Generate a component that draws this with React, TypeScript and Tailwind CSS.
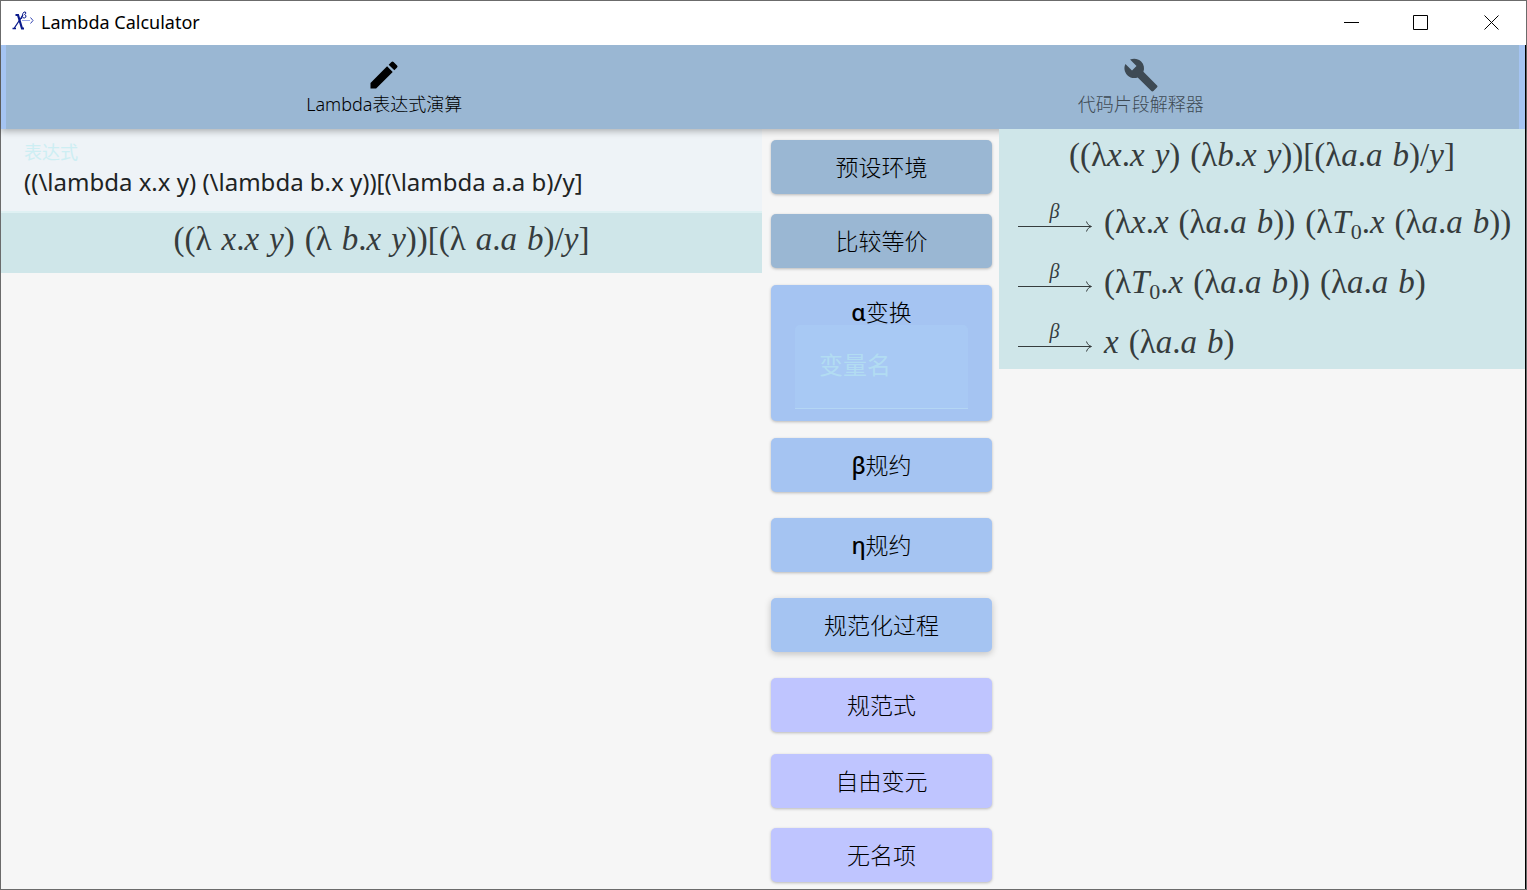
import React from "react";
import { MdBuild, MdEdit } from "react-icons/md";

const uiFont = "font-['Noto_Sans','Noto_Sans_CJK_SC',sans-serif]";

/* Latin letters are set in italics; λ, brackets, dots and digits upright. */
function Word({ text }: { text: string }) {
  const parts = text.match(/[a-zA-Z]+|_\d|[^a-zA-Z_]+/g) ?? [];
  return (
    <span>
      {parts.map((part, i) =>
        part.startsWith("_") ? (
          <sub key={i} className="text-[22px] leading-none">
            {part.slice(1)}
          </sub>
        ) : /[a-zA-Z]/.test(part) ? (
          <i key={i}>{part}</i>
        ) : (
          <span key={i}>{part}</span>
        ),
      )}
    </span>
  );
}

function Formula({ source }: { source: string }) {
  return (
    <span className="flex items-baseline gap-[10px] whitespace-nowrap font-['Liberation_Serif',serif] text-[33px] leading-[40px] text-[#363c3d]">
      {source.split(" ").map((word, i) => (
        <Word key={i} text={word} />
      ))}
    </span>
  );
}

function BetaArrow() {
  return (
    <span className="flex w-[75px] shrink-0 flex-col items-center text-[#363c3d]">
      <i className="font-['Liberation_Serif',serif] text-[20px] leading-[18px]">β</i>
      <svg className="h-[12px] w-full" viewBox="0 0 75 12" fill="none" stroke="currentColor" aria-hidden="true">
        <path d="M1 6.5H74M69.5 1.5C70.2 4 72 5.7 74.5 6.5C72 7.3 70.2 9 69.5 11.5" />
      </svg>
    </span>
  );
}

function Logo() {
  return (
    <svg className="h-[22px] w-[22px]" viewBox="0 0 22 22" fill="none" stroke="#0a1a8c" aria-hidden="true">
      <path d="M3.5 4H6L10 17.5H12" strokeWidth="2.2" />
      <path d="M11 4L2 17.5M0.5 17.5H4" strokeWidth="1.3" />
      <path d="M9.5 8L11 2.2Q11.8 0.5 13.4 1Q14.8 2 12.6 3.6Q14.8 4.4 13.8 6.2Q12.4 7.6 10.8 6.6" strokeWidth="1" />
      <path d="M10 9.5H18" stroke="#9aa6e6" strokeWidth="1" />
      <path d="M18.5 6.5L21 9.5L18.5 12.5" stroke="#3344b0" strokeWidth="1" />
    </svg>
  );
}

type ToolButtonProps = { greek?: string; label: string; tone: "steel" | "sky" | "lilac"; raised?: boolean };

function ToolButton({ greek, label, tone, raised }: ToolButtonProps) {
  const tones = { steel: "bg-[#9ab7d3]", sky: "bg-[#a5c4f2]", lilac: "bg-[#bfc5ff]" };
  const shadow = raised ? "shadow-[0_2px_7px_rgba(0,0,0,0.22)]" : "shadow-[0_1px_3px_rgba(0,0,0,0.25)]";
  return (
    <button type="button" className={`h-[54px] w-full shrink-0 rounded-[5px] pt-px text-[23px] font-light text-black ${tones[tone]} ${shadow}`}>
      {greek && <span className="font-medium">{greek}</span>}
      {label}
    </button>
  );
}

const steps = ["(λx.x (λa.a b)) (λT_0.x (λa.a b))", "(λT_0.x (λa.a b)) (λa.a b)", "x (λa.a b)"];

export default function App() {
  return (
    <div className={`flex min-h-screen flex-col border border-[#6b6b6b] bg-[#f6f6f6] ${uiFont}`}>
      <header className="relative z-20 flex h-11 items-center bg-white pb-[2px] pl-[11px]">
        <Logo />
        <h1 className="flex-1 pl-[7px] text-[18px] leading-6 text-black">Lambda Calculator</h1>
        <div className="flex h-full text-black">
          <button type="button" aria-label="Minimize" className="flex w-[70px] items-center justify-center">
            <svg className="size-4" viewBox="0 0 16 16" fill="none" stroke="currentColor">
              <path d="M1 8.5H16" />
            </svg>
          </button>
          <button type="button" aria-label="Maximize" className="flex w-[70px] items-center justify-center">
            <svg className="size-4" viewBox="0 0 16 16" fill="none" stroke="currentColor">
              <path d="M0.5 1.5H14.5V15.5H0.5Z" />
            </svg>
          </button>
          <button type="button" aria-label="Close" className="flex w-[70px] items-center justify-center">
            <svg className="size-4" viewBox="0 0 16 16" fill="none" stroke="currentColor">
              <path d="M1.5 1.5L15.5 15.5M15.5 1.5L1.5 15.5" />
            </svg>
          </button>
        </div>
      </header>

      <div className="flex flex-1 flex-col border-r border-black">
        <nav className="relative z-10 flex h-[84px] bg-[#a5c4f2] pl-[5px] pr-[6px] shadow-[0_2px_7px_rgba(0,0,0,0.3)]">
          <button type="button" className="flex flex-1 flex-col items-center bg-[#9ab7d3] pt-3 text-[18px] font-light leading-[22px] text-black">
            <MdEdit className="size-9" />
            Lambda表达式演算
          </button>
          <button type="button" className="flex flex-1 flex-col items-center bg-[#9ab7d3] pt-3 text-[18px] font-light leading-[22px] text-[#3e4a54]">
            <MdBuild className="size-9" />
            代码片段解释器
          </button>
        </nav>

        <main className="grid flex-1 grid-cols-[761fr_237fr_526fr] items-start">
          <section>
            <div className="flex h-[84px] flex-col border-b-2 border-[#dff1f3] bg-[#eef3f7] px-[23px] pt-3">
              <label htmlFor="expression" className="text-[18px] leading-[22px] text-[#cdeef3]">
                表达式
              </label>
              <input
                id="expression"
                className="w-full bg-transparent text-[24px] leading-[38px] text-[#202324] outline-none"
                defaultValue="((\lambda x.x y) (\lambda b.x y))[(\lambda a.a b)/y]"
              />
            </div>
            <div className="flex h-[60px] justify-center bg-[#cfe6e9] pt-[6px]">
              <Formula source="((λ x.x y) (λ b.x y))[(λ a.a b)/y]" />
            </div>
          </section>

          <section className="flex flex-col gap-[26px] px-[7px] pb-[7px] pl-[9px] pt-[11px]">
            <div className="flex flex-col gap-[17px]">
              <div className="flex flex-col gap-5">
                <ToolButton label="预设环境" tone="steel" />
                <ToolButton label="比较等价" tone="steel" />
              </div>
              <div className="flex h-[136px] flex-col rounded-[5px] bg-[#a5c4f2] px-6 pt-[14px] shadow-[0_1px_3px_rgba(0,0,0,0.25)]">
                <button type="button" className="h-[26px] text-[23px] font-light leading-6 text-black">
                  <span className="font-medium">α</span>变换
                </button>
                <input
                  aria-label="变量名"
                  placeholder="变量名"
                  className="h-[84px] w-full rounded-t-[5px] border-b border-[#b4d6f4] bg-[#a8c9f4] px-6 pb-1 text-[24px] outline-none placeholder:text-[#b2dcf2] placeholder:opacity-100"
                />
              </div>
              <ToolButton greek="β" label="规约" tone="sky" />
            </div>
            <ToolButton greek="η" label="规约" tone="sky" />
            <ToolButton label="规范化过程" tone="sky" raised />
            <div className="flex flex-col gap-[22px]">
              <ToolButton label="规范式" tone="lilac" />
              <div className="flex flex-col gap-5">
                <ToolButton label="自由变元" tone="lilac" />
                <ToolButton label="无名项" tone="lilac" />
              </div>
            </div>
          </section>

          <section className="relative z-20 flex h-[240px] flex-col bg-[#cfe6e9] pt-[6px]">
            <div className="flex justify-center pb-5">
              <Formula source="((λx.x y) (λb.x y))[(λa.a b)/y]" />
            </div>
            {steps.map((step) => (
              <div key={step} className="flex h-[60px] shrink-0 gap-3 pl-[18px] pt-[7px]">
                <BetaArrow />
                <Formula source={step} />
              </div>
            ))}
          </section>
        </main>
      </div>
    </div>
  );
}
